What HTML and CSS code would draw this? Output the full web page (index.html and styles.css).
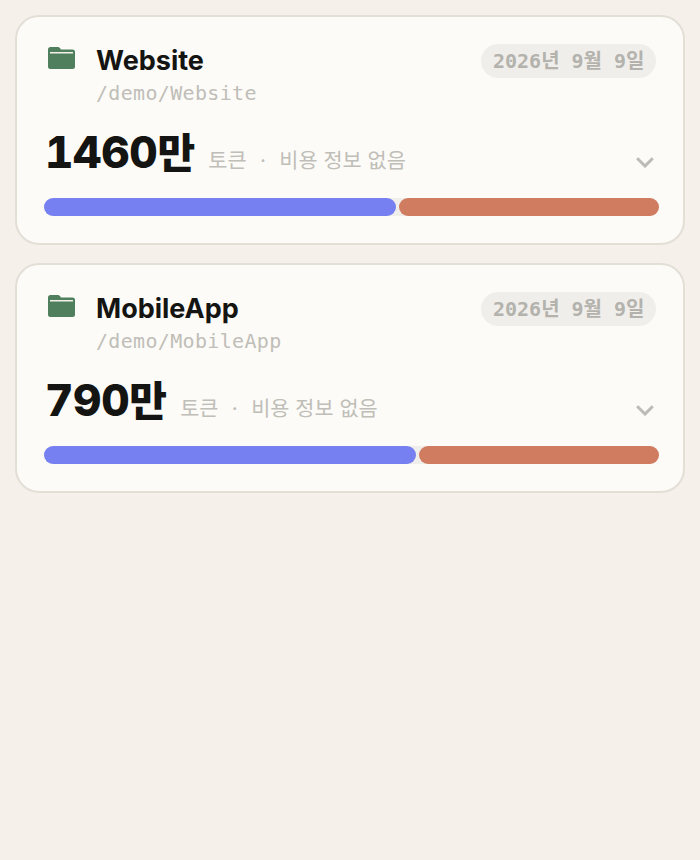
FILE: index.html
```html
<!DOCTYPE html>
<html lang="ko">
<head>
    <meta charset="UTF-8">
    <title>Projects</title>
    <link rel="stylesheet" href="styles.css">
</head>
<body>

    <div class="card">
        <div class="card-top">
            <svg class="folder" viewBox="0 0 27 22" width="27" height="22">
                <path d="M2.5 0H9.5c1.2 0 1.8.4 2.6 1.2L13 2.5H24.5A2.5 2.5 0 0 1 27 5V19.5A2.5 2.5 0 0 1 24.5 22H2.5A2.5 2.5 0 0 1 0 19.5V2.5A2.5 2.5 0 0 1 2.5 0Z" fill="#4f7f5c"/>
                <rect x="2" y="5" width="23" height="1.5" fill="#f4f1ea"/>
            </svg>
            <div class="names">
                <div class="name">Website</div>
                <div class="path">/demo/Website</div>
            </div>
            <span class="date">2026년 9월 9일</span>
        </div>
        <div class="stats">
            <span class="total">1460<span class="unit">만</span></span>
            <span class="meta">토큰 <i>·</i> 비용 정보 없음</span>
            <svg class="chevron" viewBox="0 0 18 11" width="18" height="11">
                <path d="M1.2 1.2L9 9l7.8-7.8" fill="none" stroke="#bdbbb5" stroke-width="3"/>
            </svg>
        </div>
        <div class="bar">
            <div class="bar-in" style="width: 352px"></div>
            <div class="bar-out"></div>
        </div>
    </div>

    <div class="card">
        <div class="card-top">
            <svg class="folder" viewBox="0 0 27 22" width="27" height="22">
                <path d="M2.5 0H9.5c1.2 0 1.8.4 2.6 1.2L13 2.5H24.5A2.5 2.5 0 0 1 27 5V19.5A2.5 2.5 0 0 1 24.5 22H2.5A2.5 2.5 0 0 1 0 19.5V2.5A2.5 2.5 0 0 1 2.5 0Z" fill="#4f7f5c"/>
                <rect x="2" y="5" width="23" height="1.5" fill="#f4f1ea"/>
            </svg>
            <div class="names">
                <div class="name">MobileApp</div>
                <div class="path">/demo/MobileApp</div>
            </div>
            <span class="date">2026년 9월 9일</span>
        </div>
        <div class="stats">
            <span class="total">790<span class="unit">만</span></span>
            <span class="meta">토큰 <i>·</i> 비용 정보 없음</span>
            <svg class="chevron" viewBox="0 0 18 11" width="18" height="11">
                <path d="M1.2 1.2L9 9l7.8-7.8" fill="none" stroke="#bdbbb5" stroke-width="3"/>
            </svg>
        </div>
        <div class="bar">
            <div class="bar-in" style="width: 372px"></div>
            <div class="bar-out"></div>
        </div>
    </div>

</body>
</html>
```
FILE: styles.css
```css
body {
    margin: 0;
    padding: 15px;
    min-height: 860px;
    box-sizing: border-box;
    background-color: #f5f0ea;
    font-family: Inter, "Noto Sans CJK KR", sans-serif;
}
.card {
    box-sizing: border-box;
    height: 230px;
    margin-bottom: 18px;
    padding: 27px 24px 0 27px;
    background-color: #fcfbf7;
    border: 2px solid #e3dfd7;
    border-radius: 24px;
}
.card-top {
    display: flex;
    align-items: flex-start;
    height: 62px;
}
.folder {
    margin: 3px 21px 0 4px;
}
.names {
    flex: 1;
}
.name {
    padding-top: 1px;
    font-size: 27px;
    font-weight: 700;
    line-height: 32px;
    color: #141412;
}
.path {
    margin-top: 3px;
    font-family: "DejaVu Sans Mono", monospace;
    font-size: 20px;
    letter-spacing: 0.33px;
    line-height: 26px;
    color: #c0beb8;
}
.date {
    margin-right: 3px;
    padding: 0 11.5px;
    height: 34px;
    line-height: 34px;
    border-radius: 17px;
    background-color: #f0eeea;
    font-family: "DejaVu Sans Mono", "Noto Sans CJK KR", monospace;
    font-size: 20px;
    font-weight: 700;
    color: #b3b2ad;
    white-space: nowrap;
}
.stats {
    display: flex;
    align-items: baseline;
    height: 73px;
    margin-top: 19px;
}
.total {
    margin-left: 1px;
    font-size: 44px;
    font-weight: 800;
    font-variant-numeric: tabular-nums;
    letter-spacing: -0.3px;
    line-height: 54px;
    color: #141412;
}
.unit {
    font-size: 41px;
}
.meta {
    flex: 1;
    margin-left: 13.5px;
    font-size: 20.8px;
    color: #c0beb8;
    white-space: nowrap;
}
.meta i {
    font-style: normal;
    margin: 0 7.5px;
}
.chevron {
    margin: 0 5px 3px 0;
}
.bar {
    display: flex;
    gap: 3px;
    height: 18px;
    border-radius: 9px;
    background-color: #f0eeea;
}
.bar-in {
    background-color: #7680f0;
    border-radius: 9px;
}
.bar-out {
    flex: 1;
    background-color: #d07c60;
    border-radius: 9px;
}
```
